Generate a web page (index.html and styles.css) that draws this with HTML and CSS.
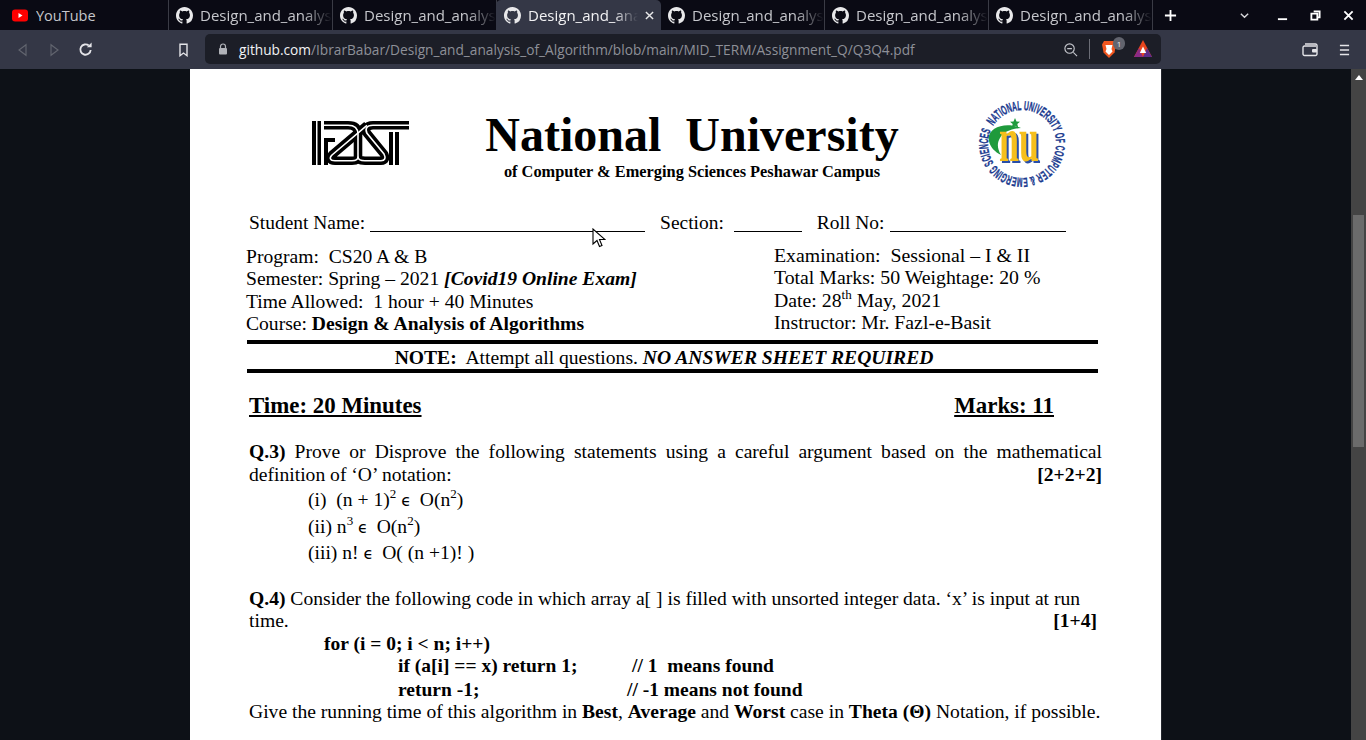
FILE: index.html
```html
<html>
<head>
    <title>Design_and_analysis_of_Algorithm/Q3Q4.pdf</title>
    <link rel="stylesheet" href="styles.css">
</head>
<body>
    <svg class="defs" width="0" height="0">
        <symbol id="gh" viewBox="0 0 16 16"><path fill="#e8e8ea" d="M8 0C3.58 0 0 3.58 0 8c0 3.54 2.29 6.53 5.47 7.59.4.07.55-.17.55-.38 0-.19-.01-.82-.01-1.49-2.01.37-2.53-.49-2.69-.94-.09-.23-.48-.94-.82-1.13-.28-.15-.68-.52-.01-.53.63-.01 1.08.58 1.23.82.72 1.21 1.87.87 2.33.66.07-.52.28-.87.51-1.07-1.78-.2-3.64-.89-3.64-3.95 0-.87.31-1.59.82-2.15-.08-.2-.36-1.02.08-2.12 0 0 .67-.21 2.2.82.64-.18 1.32-.27 2-.27.68 0 1.36.09 2 .27 1.53-1.04 2.2-.82 2.2-.82.44 1.1.16 1.92.08 2.12.51.56.82 1.27.82 2.15 0 3.07-1.87 3.75-3.65 3.95.29.25.54.73.54 1.48 0 1.07-.01 1.93-.01 2.2 0 .21.15.46.55.38A8.013 8.013 0 0016 8c0-4.42-3.58-8-8-8z"/></symbol>
    </svg>

    <div class="tabstrip">
        <div class="tab first">
            <svg class="favicon" viewBox="0 0 16 16"><rect x="0" y="2" width="16" height="12" rx="3" fill="#f00"/><path d="M6.5 5.500v5l4-2.500z" fill="#fff"/></svg>
            <span class="tab-title">YouTube</span>
        </div>
        <div class="tab"><svg class="favicon"><use href="#gh"/></svg><span class="tab-title">Design_and_analysis_of_Algorithm</span></div>
        <div class="tab"><svg class="favicon"><use href="#gh"/></svg><span class="tab-title">Design_and_analysis_of_Algorithm</span></div>
        <div class="tab active">
            <svg class="favicon"><use href="#gh"/></svg><span class="tab-title">Design_and_analysis_of_Algorithm</span>
            <svg class="tab-x" viewBox="0 0 10 10"><path d="M1 1l8 8M9 1l-8 8" stroke="#e8e8ea" stroke-width="1.6"/></svg>
        </div>
        <div class="tab"><svg class="favicon"><use href="#gh"/></svg><span class="tab-title">Design_and_analysis_of_Algorithm</span></div>
        <div class="tab"><svg class="favicon"><use href="#gh"/></svg><span class="tab-title">Design_and_analysis_of_Algorithm</span></div>
        <div class="tab"><svg class="favicon"><use href="#gh"/></svg><span class="tab-title">Design_and_analysis_of_Algorithm</span></div>
        <svg class="newtab" viewBox="0 0 14 14"><path d="M7 1v12M1 7h12" stroke="#fff" stroke-width="2"/></svg>
        <div class="winctrls">
            <svg viewBox="0 0 12 12" class="chev"><path d="M2 4l4 4 4-4" fill="none" stroke="#d8d8dc" stroke-width="1.5"/></svg>
            <svg viewBox="0 0 12 12" class="min"><path d="M1 10h10" stroke="#fff" stroke-width="2"/></svg>
            <svg viewBox="0 0 12 12" class="max"><path d="M4 1.5h6.5V8H8M1.5 4H8v6.5H1.5z" fill="none" stroke="#fff" stroke-width="2"/></svg>
            <svg viewBox="0 0 12 12" class="close"><path d="M1.5 1.5l9 9M10.5 1.5l-9 9" stroke="#fff" stroke-width="2"/></svg>
        </div>
    </div>

    <div class="toolbar">
        <svg class="tool back" viewBox="0 0 12 16"><path d="M10 2L2 8l8 6z" fill="none" stroke="#62656f" stroke-width="1.3"/></svg>
        <svg class="tool fwd" viewBox="0 0 12 16"><path d="M2 2l8 6-8 6z" fill="none" stroke="#62656f" stroke-width="1.3"/></svg>
        <svg class="tool reload" viewBox="0 0 16 16"><path d="M13.5 8.5A5.500 5.500 0 1 1 11.5 3.800" fill="none" stroke="#e4e4e8" stroke-width="2"/><path d="M9.5 5.500h5v-5z" fill="#e4e4e8"/></svg>
        <svg class="tool bookmark" viewBox="0 0 12 16"><path d="M2 1.5h8v13l-4-3-4 3z" fill="none" stroke="#e4e4e8" stroke-width="1.6"/></svg>
        <div class="urlbar">
            <svg class="lock" viewBox="0 0 10 12"><path d="M2.5 5V3.500a2.500 2.500 0 0 1 5 0V5" fill="none" stroke="#b0b2b8" stroke-width="1.2"/><rect x="1" y="5" width="8" height="6.500" rx="1" fill="#b0b2b8"/></svg>
            <span class="url"><b>github.com</b>/IbrarBabar/Design_and_analysis_of_Algorithm/blob/main/MID_TERM/Assignment_Q/Q3Q4.pdf</span>
            <svg class="zoomout" viewBox="0 0 16 16"><circle cx="7" cy="7" r="5" fill="none" stroke="#c4c6cc" stroke-width="1.2"/><path d="M11 11l4 4M4.5 7h5" stroke="#c4c6cc" stroke-width="1.2"/></svg>
            <span class="urlsep"></span>
            <span class="shield">
                <svg viewBox="0 0 16 19" width="16" height="19"><path d="M3 1h10l2 3.500-1.500 8L8 18l-5.500-5.500L1 4.500z" fill="#f1561f"/><path d="M4.500 5h7l-1 4 1 2.500L8 15l-3.500-3.500 1-2.500z" fill="#fff"/></svg>
                <span class="badge">1</span>
            </span>
            <svg class="rewards" viewBox="0 0 18 18"><path d="M9 0l9 17H0z" fill="#e8451d"/><path d="M0 17L5 8l4 9z" fill="#8a2a86"/><path d="M18 17L13 8l-4 9z" fill="#5b2b8a"/><path d="M9 6.500l3.200 6.500H5.800z" fill="#fff"/></svg>
        </div>
        <svg class="tool wallet" viewBox="0 0 16 14"><path d="M14 3H2.500A1.500 1.500 0 0 0 1 4.500V11a1.500 1.500 0 0 0 1.500 1.500h11A1.500 1.500 0 0 0 15 11V2.500A1.500 1.500 0 0 0 13.500 1H3" fill="none" stroke="#e4e4e8" stroke-width="1.4"/><rect x="10" y="6" width="5" height="3.500" rx="1" fill="#e4e4e8"/></svg>
        <svg class="tool menu" viewBox="0 0 12 14"><path d="M1 2h10M1 7h10M1 12h10" stroke="#e4e4e8" stroke-width="1.6"/></svg>
    </div>

    <div class="viewer">
        <div class="pdf-area">
            <div class="sheet">
                <div class="head">
                    <svg class="fast-logo" viewBox="0 0 97 44">
                        <g fill="none" stroke="#000" stroke-width="8.6">
                            <path d="M12 4.300H36c7 0 10 3 10 9V36"/>
                            <path d="M55 4.300L20 34c-3 3-2 5.700 3 5.700H40c4 0 6-1 6-4"/>
                            <path d="M97 4.300H61c-7 0-8 4-6 8L72 33c2 4 1 6.700-3 6.700H53c-4 0-7-1-7-4"/>
                        </g>
                        <g fill="none" stroke="#fff" stroke-width="1.6">
                            <path d="M12 4.300H36c7 0 10 3 10 9V36"/>
                            <path d="M55 4.300L20 34c-3 3-2 5.700 3 5.700H40c4 0 6-1 6-4"/>
                            <path d="M97 4.300H61c-7 0-8 4-6 8L72 33c2 4 1 6.700-3 6.700H53c-4 0-7-1-7-4"/>
                        </g>
                        <path d="M0 0h4v44H0zM5.500 0h3.500v44H5.500zM12 17h11v4H16v23h-4zM77 11h4v33h-4zM83 11h4v33h-4z" fill="#000"/>
                    </svg>
                    <div class="title-block">
                        <h1>National&nbsp; University</h1>
                        <p class="sub">of Computer &amp; Emerging Sciences Peshawar Campus</p>
                    </div>
                    <svg class="nu-logo" viewBox="0 0 90 90">
                        <defs><path id="ring" d="M11 45a34 34 0 1 1 68 0a34 34 0 1 1-68 0" transform="rotate(32 45 45)"/></defs>
                        <text class="ring-text"><textPath href="#ring" textLength="208" lengthAdjust="spacingAndGlyphs">NATIONAL UNIVERSITY OF COMPUTER &amp; EMERGING SCIENCES</textPath></text>
                        <path d="M44 29C28 22 9 29 12 42c1 6 6 11 12 14-4-7-4-12-1-17 3-6 11-9 21-10z" fill="#1f9a3c"/>
                        <path d="M38 19l1.500 3.500 3.500.3-2.700 2.300.9 3.500-3.200-1.900-3.200 1.900.9-3.500-2.700-2.300 3.500-.3z" fill="#1f9a3c"/>
                        <text class="nu-text" x="22" y="62" textLength="40" lengthAdjust="spacingAndGlyphs">nu</text>
                    </svg>
                </div>

                <div class="info-row">
                    <span>Student Name:</span><span class="blank b-name"></span>
                    <span class="sect">Section:</span><span class="blank b-sect"></span>
                    <span class="roll">Roll No:</span><span class="blank b-roll"></span>
                </div>

                <div class="details">
                    <div class="col-left">
                        <div>Program:&nbsp; CS20 A &amp; B</div>
                        <div>Semester: Spring – 2021 <b><i>[Covid19 Online Exam]</i></b></div>
                        <div>Time Allowed:&nbsp; 1 hour + 40 Minutes</div>
                        <div>Course: <b>Design &amp; Analysis of Algorithms</b></div>
                    </div>
                    <div class="col-right">
                        <div>Examination:&nbsp; Sessional – I &amp; II</div>
                        <div>Total Marks: 50 Weightage: 20 %</div>
                        <div>Date: 28<sup>th</sup> May, 2021</div>
                        <div>Instructor: Mr. Fazl-e-Basit</div>
                    </div>
                </div>

                <div class="note"><b>NOTE:</b>&nbsp; Attempt all questions. <b><i>NO ANSWER SHEET REQUIRED</i></b></div>

                <div class="time-row"><span>Time: 20 Minutes</span><span>Marks: 11</span></div>

                <div class="question q3">
                    <div class="just"><b>Q.3)</b> Prove or Disprove the following statements using a careful argument based on the mathematical</div>
                    <div class="split"><span>definition of ‘O’ notation:</span><b>[2+2+2]</b></div>
                    <div class="item i1">(i)&nbsp; (n + 1)<sup>2</sup> <span class="elem">ϵ</span>&nbsp; O(n<sup>2</sup>)</div>
                    <div class="item i2">(ii) n<sup>3</sup> <span class="elem">ϵ</span>&nbsp; O(n<sup>2</sup>)</div>
                    <div class="item i3">(iii) n! <span class="elem">ϵ</span>&nbsp; O( (n +1)! )</div>
                </div>

                <div class="question q4">
                    <div><b>Q.4)</b> Consider the following code in which array a[ ] is filled with unsorted integer data. ‘x’ is input at run</div>
                    <div class="split short"><span>time.</span><b>[1+4]</b></div>
                    <div class="code c1"><b>for (i = 0; i &lt; n; i++)</b></div>
                    <div class="code c2"><b class="stmt">if (a[i] == x) return 1;</b><b class="cmt">// 1&nbsp; means found</b></div>
                    <div class="code c2 last"><b class="stmt">return -1;</b><b class="cmt cmt2">// -1 means not found</b></div>
                    <div class="final">Give the running time of this algorithm in <b>Best</b>, <b>Average</b> and <b>Worst</b> case in <b>Theta (Θ)</b> Notation, if possible.</div>
                </div>

                <svg class="cursor" viewBox="0 0 14 20"><path d="M1 1v15l4-3.500 2.500 6 2.500-1-2.500-6H13z" fill="#fff" stroke="#000" stroke-width="1.1"/></svg>
            </div>
        </div>
        <div class="scrollbar">
            <svg class="arrow" viewBox="0 0 8 5"><path d="M4 0l4 5H0z" fill="#fff"/></svg>
            <div class="thumb"></div>
        </div>
    </div>
</body>
</html>
```

FILE: styles.css
```css
html, body {
    margin: 0;
    height: 100%;
    overflow: hidden;
    background: #0d1117;
}
.defs {
    position: absolute;
}

/* browser chrome */
.tabstrip {
    display: flex;
    align-items: center;
    height: 30px;
    background: #0a0a14;
    font-family: "Open Sans", sans-serif;
    font-size: 15px;
    color: #c6c7cc;
}
.tab {
    display: flex;
    align-items: center;
    width: 164px;
    height: 30px;
    box-sizing: border-box;
    padding-left: 7px;
    border-right: 1px solid #3a3b45;
    overflow: hidden;
}
.tab.first {
    width: 169px;
    padding-left: 12px;
    font-size: 14.5px;
}
.tab.active {
    background: #343746;
    color: #f2f2f4;
    border-right: none;
    border-radius: 5px 5px 0 0;
    margin-left: -1px;
    width: 165px;
    padding-left: 8px;
}
.favicon {
    flex: none;
    width: 17px;
    height: 17px;
}
.first .favicon {
    width: 16px;
}
.tab-title {
    flex: 1;
    min-width: 0;
    margin-left: 7px;
    white-space: nowrap;
    overflow: hidden;
    -webkit-mask-image: linear-gradient(to right, #000 78%, transparent 100%);
}
.first .tab-title {
    margin-left: 8px;
    -webkit-mask-image: none;
}
.tab-x {
    flex: none;
    width: 9px;
    height: 9px;
    margin: 0 7px 0 7px;
}
.newtab {
    flex: none;
    width: 13px;
    height: 13px;
    margin-left: 11px;
}
.winctrls {
    display: flex;
    align-items: center;
    margin-left: auto;
    padding-right: 12px;
}
.winctrls svg {
    width: 11px;
    height: 11px;
}
.winctrls .chev {
    margin-right: 27px;
}
.winctrls .min {
    margin-right: 22px;
}
.winctrls .max {
    margin-right: 22px;
}

.toolbar {
    display: flex;
    align-items: center;
    height: 39px;
    background: #343746;
}
.tool {
    flex: none;
}
.back {
    width: 11px;
    height: 14px;
    margin-left: 17px;
}
.fwd {
    width: 11px;
    height: 14px;
    margin-left: 21px;
}
.reload {
    width: 15px;
    height: 15px;
    margin-left: 18px;
}
.bookmark {
    width: 11px;
    height: 14px;
    margin-left: 85px;
}
.urlbar {
    display: flex;
    align-items: center;
    width: 956px;
    height: 30px;
    margin-left: 16px;
    margin-bottom: 1px;
    background: #1c1e27;
    border-radius: 5px;
    font-family: "Open Sans", sans-serif;
    font-size: 13.7px;
    color: #8e9098;
}
.lock {
    flex: none;
    width: 10px;
    height: 12px;
    margin-left: 13px;
}
.url {
    margin-left: 11px;
    white-space: nowrap;
}
.url b {
    font-weight: 400;
    color: #f2f2f4;
}
.zoomout {
    flex: none;
    width: 15px;
    height: 15px;
    margin-left: auto;
}
.urlsep {
    width: 1px;
    height: 20px;
    margin-left: 11px;
    background: #6b6d76;
}
.shield {
    position: relative;
    display: block;
    width: 16px;
    height: 19px;
    margin-left: 11px;
}
.shield svg {
    display: block;
}
.badge {
    position: absolute;
    left: 12px;
    top: -3px;
    width: 12px;
    height: 13px;
    border-radius: 6px;
    background: #62646e;
    color: #e4e4e8;
    font-size: 8px;
    line-height: 13px;
    text-align: center;
}
.rewards {
    flex: none;
    width: 18px;
    height: 18px;
    margin: 0 9px 0 17px;
}
.wallet {
    width: 16px;
    height: 14px;
    margin-left: 141px;
}
.menu {
    width: 11px;
    height: 14px;
    margin-left: 21px;
}

/* pdf viewer */
.viewer {
    display: flex;
    height: 671px;
}
.pdf-area {
    flex: 1;
    padding-left: 190px;
    overflow: hidden;
}
.scrollbar {
    flex: none;
    width: 15px;
    background: #444444;
}
.arrow {
    display: block;
    width: 8px;
    height: 5px;
    margin: 6px auto 0;
}
.thumb {
    width: 11px;
    height: 232px;
    margin: 135px 0 0 2px;
    background: #6b6b6b;
}
.sheet {
    position: relative;
    width: 971px;
    height: 671px;
    background: #fff;
    box-shadow: 1px 0 0 #24272e;
    box-sizing: border-box;
    padding-top: 29px;
    font-family: "Liberation Serif", serif;
    font-size: 19.6px;
    line-height: 22.5px;
    color: #000;
}
sup {
    font-size: 13px;
    line-height: 0;
}
.elem {
    font-family: "DejaVu Sans", sans-serif;
    font-size: 16px;
    line-height: 0;
    letter-spacing: -1px;
}

.head {
    display: flex;
    align-items: flex-start;
    height: 112px;
}
.fast-logo {
    flex: none;
    width: 97px;
    height: 44px;
    margin: 23px 0 0 122px;
}
.title-block {
    flex: none;
    width: 414px;
    margin: 10px 0 0 76px;
    text-align: center;
}
h1 {
    margin: 0;
    font-size: 48px;
    line-height: 54px;
    font-weight: 700;
    white-space: nowrap;
}
.sub {
    margin: 1px 0 0;
    font-size: 16.35px;
    line-height: 18px;
    font-weight: 700;
    white-space: nowrap;
}
.nu-logo {
    flex: none;
    width: 90px;
    height: 90px;
    margin: 1px 0 0 78px;
}
.ring-text {
    font-family: "Liberation Sans", sans-serif;
    font-size: 13px;
    font-weight: 700;
    fill: #1a3a8f;
    stroke: #1a3a8f;
    stroke-width: 0.35px;
}
.nu-text {
    font-family: "Liberation Serif", serif;
    font-size: 64px;
    font-weight: 700;
    fill: #f6bf1c;
    filter: drop-shadow(2px 2px 0 #2a4fa8);
}

.info-row {
    display: flex;
    height: 22px;
    margin: 2px 0 0 59px;
    font-size: 19.45px;
}
.blank {
    height: 19px;
    border-bottom: 1px solid #000;
}
.b-name {
    width: 275px;
    margin-left: 5px;
}
.sect {
    margin-left: 15px;
}
.b-sect {
    width: 68px;
    margin-left: 10px;
}
.roll {
    margin-left: 15px;
}
.b-roll {
    width: 176px;
    margin-left: 6px;
}

.details {
    display: flex;
    margin: 11px 0 0 56px;
    height: 92px;
}
.col-left {
    width: 528px;
    padding-top: 0.5px;
}
.col-right {
    margin-top: -1px;
    font-size: 19.8px;
    line-height: 22.3px;
}

.note {
    width: 851px;
    height: 33px;
    margin: 3px 0 0 57px;
    box-sizing: border-box;
    border-top: 4px solid #000;
    border-bottom: 4px solid #000;
    text-align: center;
    line-height: 27px;
    padding-right: 17px;
}

.time-row {
    display: flex;
    justify-content: space-between;
    width: 805px;
    margin: 20px 0 0 59px;
    font-size: 22.9px;
    line-height: 26px;
    font-weight: 700;
    text-decoration: underline;
}

.question {
    width: 853px;
    margin-left: 59px;
}
.q3 {
    margin-top: 22px;
}
.q4 {
    margin-top: 23px;
}
.just {
    text-align: justify;
    text-align-last: justify;
}
.split {
    display: flex;
    justify-content: space-between;
}
.split.short {
    width: 848px;
}
.item {
    margin-left: 59px;
}
.item.i1 {
    margin-top: 3px;
}
.item.i2, .item.i3 {
    margin-top: 4px;
}
.code {
    font-size: 19.5px;
    white-space: nowrap;
}
.c1 {
    margin-left: 75px;
}
.c2 {
    margin-left: 149px;
    display: flex;
}
.c2.last {
    margin-top: 1px;
}
.stmt {
    width: 234px;
}
.cmt2 {
    margin-left: -5px;
}
.final {
    white-space: nowrap;
}
.cursor {
    position: absolute;
    left: 402px;
    top: 159px;
    width: 14px;
    height: 20px;
}
```
